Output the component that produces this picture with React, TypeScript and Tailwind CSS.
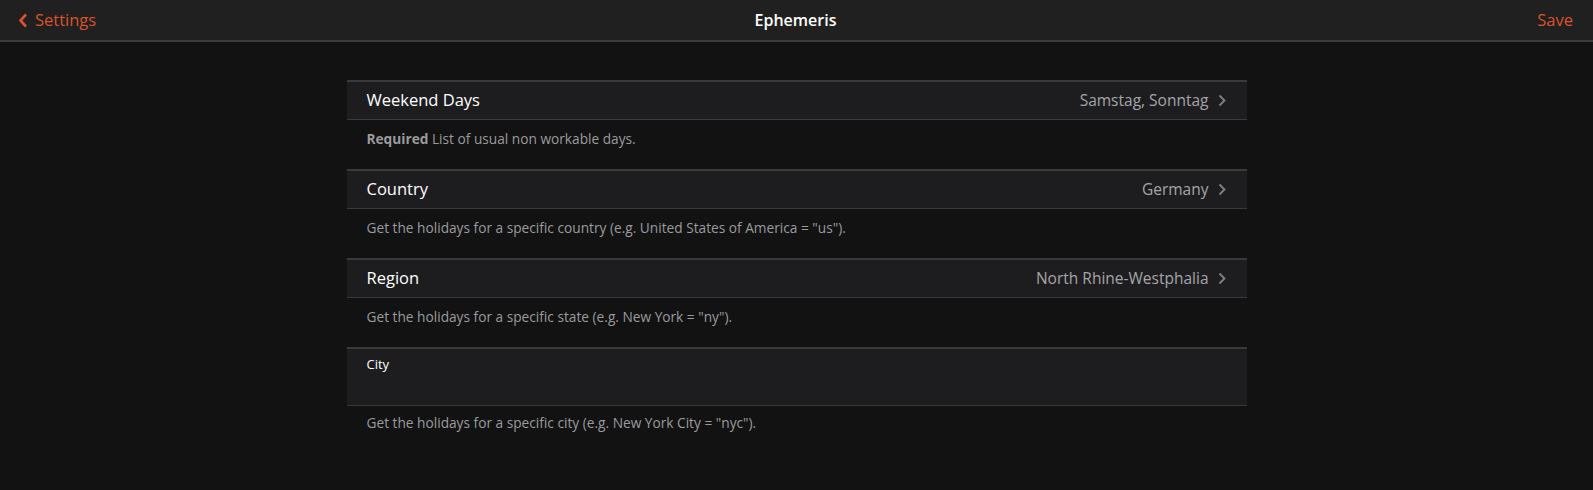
import React from "react";

const font = { fontFamily: '"Open Sans", "Noto Sans", sans-serif' };

function Chevron() {
  return (
    <svg width="8" height="13" viewBox="0 0 8 13" className="shrink-0">
      <path d="M1.5 1.5 L6.5 6.5 L1.5 11.5" fill="none" stroke="#808083" strokeWidth="1.8" />
    </svg>
  );
}

function SelectRow({ title, value, desc }: { title: string; value: string; desc: React.ReactNode }) {
  return (
    <div>
      <div className="flex h-[40px] items-center justify-between border-t-2 border-b border-t-[#3a3a3c] border-b-[#3a3a3c] bg-[#1d1d1f] pl-5 pr-[21px]">
        <span className="text-[16.5px] text-white">{title}</span>
        <span className="flex items-center gap-[9px] text-[15.5px] text-[#a5a5a8]">
          {value}
          <Chevron />
        </span>
      </div>
      <div className="h-[49px] pl-5 pt-[10px] text-[13.7px] leading-[18px] text-[#9b9b9e]">{desc}</div>
    </div>
  );
}

export default function App() {
  return (
    <div className="min-h-screen bg-[#121212]" style={font}>
      <header className="flex h-[42px] items-center justify-between border-b-2 border-[#3c3c3c] bg-[#202020] pl-[18px] pr-[20px]">
        <div className="flex w-40 items-center gap-[7px] text-[16.5px] text-[#d9532c]">
          <svg width="10" height="15" viewBox="0 0 10 15">
            <path d="M8 1.5 L2.5 7.5 L8 13.5" fill="none" stroke="#d9532c" strokeWidth="2.6" />
          </svg>
          <span>Settings</span>
        </div>
        <div className="text-[16px] font-semibold text-white">Ephemeris</div>
        <div className="flex w-40 justify-end text-[16.5px] text-[#d9532c]">Save</div>
      </header>
      <main className="pt-[38px]">
        <div className="mx-auto w-[900px]">
          <SelectRow
            title="Weekend Days"
            value="Samstag, Sonntag"
            desc={
              <>
                <span className="font-bold">Required</span> List of usual non workable days.
              </>
            }
          />
          <SelectRow
            title="Country"
            value="Germany"
            desc={<>Get the holidays for a specific country (e.g. United States of America = "us").</>}
          />
          <SelectRow
            title="Region"
            value="North Rhine-Westphalia"
            desc={<>Get the holidays for a specific state (e.g. New York = "ny").</>}
          />
          <div className="h-[59px] border-t-2 border-b border-t-[#3a3a3c] border-b-[#3a3a3c] bg-[#1d1d1f] pl-5 pt-[6px] text-[13px] text-white">
            City
          </div>
          <div className="pl-5 pt-[8px] text-[13.7px] leading-[18px] text-[#9b9b9e]">
            Get the holidays for a specific city (e.g. New York City = "nyc").
          </div>
        </div>
      </main>
    </div>
  );
}
